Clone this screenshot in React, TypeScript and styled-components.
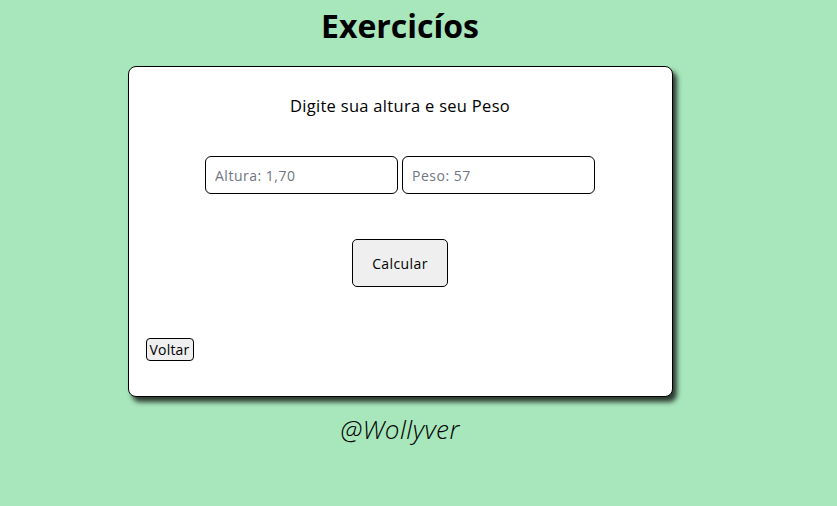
import React from 'react'
import styled, { createGlobalStyle } from 'styled-components'

const GlobalStyle = createGlobalStyle`
    body {
        margin: 0;
        background-color: #a8e6bb;
        font-family: "Open Sans", "Noto Sans", sans-serif;
    }
`;

const App: React.FC = () => {
    return (
        <>
            <GlobalStyle />
            <Page>
                <Title>Exercicíos</Title>
                <Card>
                    <Subtitle>Digite sua altura e seu Peso</Subtitle>
                    <Inputs>
                        <Field placeholder="Altura: 1,70" />
                        <Field placeholder="Peso: 57" />
                    </Inputs>
                    <Actions>
                        <Calculate>Calcular</Calculate>
                    </Actions>
                    <Back>Voltar</Back>
                </Card>
                <Signature>@Wollyver</Signature>
            </Page>
        </>
    )
}

const Page = styled.div`
    width: 800px;
    display: flex;
    flex-direction: column;
    align-items: center;
`;

const Title = styled.h1`
    margin: 6px 0 20px;
    font-size: 32px;
    font-weight: 700;
    line-height: 40px;
    color: #000;
`;

const Card = styled.div`
    box-sizing: border-box;
    width: 545px;
    height: 331px;
    background: #fff;
    border: 1px solid #000;
    border-radius: 8px;
    box-shadow: 4px 5px 5px rgba(0, 0, 0, 0.75);
    padding: 28px 17px 0;
    display: flex;
    flex-direction: column;
`;

const Subtitle = styled.p`
    margin: 0;
    text-align: center;
    font-size: 16.5px;
    letter-spacing: 0.3px;
    line-height: 22px;
    color: #000;
`;

const Inputs = styled.div`
    margin-top: 39px;
    display: flex;
    justify-content: center;
    gap: 4px;
`;

const Field = styled.input`
    box-sizing: border-box;
    width: 193px;
    height: 38px;
    border: 1px solid #000;
    border-radius: 6px;
    padding: 0 9px;
    font-family: inherit;
    font-size: 14px;
    letter-spacing: 0.5px;
    &::placeholder {
        color: #6f7580;
    }
`;

const Actions = styled.div`
    margin-top: 45px;
    display: flex;
    justify-content: center;
`;

const Calculate = styled.button`
    box-sizing: border-box;
    width: 96px;
    height: 48px;
    background: #efefef;
    border: 1px solid #000;
    border-radius: 5px;
    font-family: inherit;
    font-size: 14px;
    letter-spacing: 0.4px;
    color: #000;
`;

const Back = styled.button`
    align-self: flex-start;
    margin-top: 51px;
    box-sizing: border-box;
    height: 23px;
    padding: 0 3px;
    background: #efefef;
    border: 1px solid #000;
    border-radius: 4px;
    font-family: inherit;
    font-size: 14px;
    letter-spacing: 0.2px;
    color: #000;
`;

const Signature = styled.p`
    margin: 14px 0 0;
    font-size: 26px;
    font-style: italic;
    font-weight: 300;
    letter-spacing: 0.5px;
    color: #000;
`;

export default App
